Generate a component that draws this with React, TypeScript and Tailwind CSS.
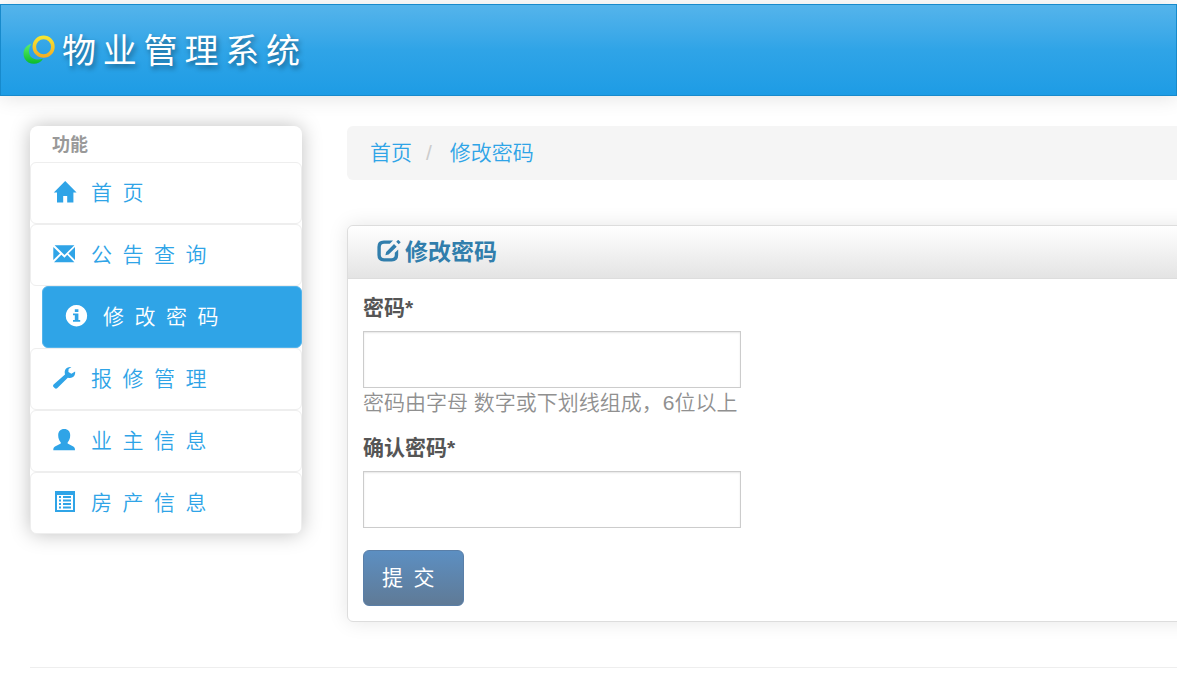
import type { ReactNode } from "react";

function Glyph({ children, className = "size-6" }: { children: ReactNode; className?: string }) {
  return (
    <svg viewBox="0 0 24 24" fill="currentColor" aria-hidden="true" className={`shrink-0 ${className}`}>
      {children}
    </svg>
  );
}

const HomeIcon = () => (
  <Glyph>
    <path d="M12.2 0 L23.6 11.6 H20.4 V21.5 H14.2 V15 H10.2 V21.5 H4 V11.6 H0.8 Z" />
  </Glyph>
);

const MailIcon = () => (
  <Glyph>
    <path d="M1.6 2.2 H21.4 L11.5 12 Z M0.3 4 L7 10.4 L0.3 17 Z M22 4 V17 L15.4 10.4 Z M8.3 11.7 L11.5 14.8 L14.2 11.7 L21.4 19.3 H1 Z" />
  </Glyph>
);

const InfoIcon = () => (
  <Glyph>
    <path
      fillRule="evenodd"
      d="M11.5 0 A10.7 10.7 0 1 1 11.4 0 Z M9.8 4.2 V7 H13.4 V4.2 Z M8 8.4 V10.2 H9.8 V15 H8 V16.8 H15.2 V15 H13.4 V8.4 Z"
    />
  </Glyph>
);

const WrenchIcon = () => (
  <Glyph>
    <path d="M18.4 0.1 C14.2 -0.6 11.2 2.4 11.8 6.2 L12 7.6 L0.6 17.4 C-0.2 18.3 -0.1 19.3 0.6 20 L1.9 21.3 C2.6 21.9 3.6 21.8 4.4 21 L14.8 10.7 L16.4 11 C20 11.3 22.6 8.7 22.1 4.6 L18.4 6.7 L15.4 4.9 L15.6 2 Z" />
  </Glyph>
);

const UserIcon = () => (
  <Glyph>
    <path d="M11.2 0 C15 0 17.2 2.4 17.2 6.2 C17.2 9.2 16.2 11.8 14.6 13.4 V14.6 L20.3 17.6 C21.7 18.4 22 19.4 22 21.2 H0.3 C0.3 19.4 0.6 18.4 2 17.6 L7.8 14.6 V13.4 C6.2 11.8 5.2 9.2 5.2 6.2 C5.2 2.4 7.4 0 11.2 0 Z" />
  </Glyph>
);

const ListIcon = () => (
  <Glyph>
    <path
      fillRule="evenodd"
      d="M2 0 H22 V21 H2 Z M4 4 V19 H20 V4 Z M6 5 H8 V7 H6 Z M10 5 H18 V7 H10 Z M6 8.5 H8 V10.5 H6 Z M10 8.5 H18 V10.5 H10 Z M6 12 H8 V14 H6 Z M10 12 H18 V14 H10 Z M6 15.5 H8 V17.5 H6 Z M10 15.5 H18 V17.5 H10 Z"
    />
  </Glyph>
);

const EditIcon = () => (
  <Glyph>
    <path d="M16 0.6 L12.8 3.8 H7.2 Q3.8 3.8 3.8 7.2 V14.8 Q3.8 18.2 7.2 18.2 H14.4 Q17.8 18.2 17.8 14.8 V12.8 L21.2 9.4 V15 Q21.2 21.4 14.8 21.4 H6.8 Q0.4 21.4 0.4 15 V7 Q0.4 0.6 6.8 0.6 Z" />
    <path d="M17 4 L19.7 6.7 L11.6 14.6 L8.4 15.2 L9.2 12 Z M19.2 1.7 L21.2 -0.2 L23.7 2.3 L21.7 4.2 Z" />
  </Glyph>
);

const menu = [
  { label: "首页", icon: <HomeIcon /> },
  { label: "公告查询", icon: <MailIcon /> },
  { label: "修改密码", icon: <InfoIcon />, active: true },
  { label: "报修管理", icon: <WrenchIcon /> },
  { label: "业主信息", icon: <UserIcon /> },
  { label: "房产信息", icon: <ListIcon /> },
];

function Logo() {
  return (
    <svg viewBox="0 0 32 32" fill="none" aria-hidden="true" className="size-8 shrink-0">
      <defs>
        <linearGradient id="ring" x1="0" y1="0" x2="0" y2="1">
          <stop offset="0" stopColor="#f5e532" />
          <stop offset="1" stopColor="#f3af25" />
        </linearGradient>
        <linearGradient id="arc" x1="0" y1="0" x2="0" y2="1">
          <stop offset="0" stopColor="#5cf06c" />
          <stop offset="1" stopColor="#0bbb2b" />
        </linearGradient>
      </defs>
      <path d="M8.5 9.8 C1.5 11.5 -1.2 18.5 1.6 24.5 C5 31.5 16.5 31.5 20 24.8 C14 26.5 8 25 6.6 20.5 C5.2 17 6.3 13 8.5 9.8 Z" fill="url(#arc)" />
      <circle cx="20.6" cy="12.7" r="9.3" stroke="url(#ring)" strokeWidth="3.6" />
    </svg>
  );
}

function Field({ id, label, hint }: { id: string; label: string; hint?: string }) {
  return (
    <div>
      <label htmlFor={id} className="mb-2 block leading-[30px] font-bold text-[#555]">
        {label}
      </label>
      <input
        id={id}
        type="password"
        className="block h-[57px] w-[378px] max-w-full border border-[#ccc] bg-white px-4 shadow-[inset_0_1px_2px_rgba(0,0,0,0.1)] outline-none"
      />
      {hint && <p className="leading-[30px] font-[350] whitespace-nowrap text-[#909090]">{hint}</p>}
    </div>
  );
}

export default function App() {
  return (
    <div className="min-h-screen overflow-x-hidden bg-white pt-1 font-['Open_Sans','Noto_Sans_CJK_SC',sans-serif] text-[21px]">
      <header className="flex h-[92px] items-center border border-[#178acc] bg-linear-to-b from-[#54b4eb] via-[#2fa4e7] to-[#1d9ce5] px-[22px] shadow-[0_1px_20px_rgba(0,0,0,0.12)]">
        <a href="#" className="flex items-center gap-[7px]">
          <Logo />
          <span className="text-[34px] leading-none font-normal tracking-[0.2em] text-white [text-shadow:2px_3px_5px_rgba(0,0,0,0.4)]">
            物业管理系统
          </span>
        </a>
      </header>

      <div className="flex items-start pt-[30px] pl-[30px]">
        <nav className="w-[272px] shrink-0 rounded-lg bg-white shadow-[0_0_20px_rgba(0,0,0,0.25)]">
          <h2 className="px-[22px] text-lg leading-9 font-bold text-[#999]">功能</h2>
          <ul>
            {menu.map((item) => (
              <li key={item.label} className={item.active ? "pl-3" : ""}>
                <a
                  href="#"
                  className={`flex h-[62px] items-center gap-[14px] rounded-md border px-[22px] font-[350] tracking-[0.5em] ${
                    item.active ? "border-[#54b4eb] bg-[#2fa4e7] text-white" : "border-[#eee] text-[#2fa4e7]"
                  }`}
                >
                  {item.icon}
                  <span>{item.label}</span>
                </a>
              </li>
            ))}
          </ul>
        </nav>

        <main className="-mr-8 ml-[45px] min-w-0 flex-1 font-['Liberation_Sans','Noto_Sans_CJK_SC',sans-serif]">
          <nav className="flex h-[54px] items-center rounded-md bg-[#f5f5f5] px-[23px] font-[350]">
            <a href="#" className="text-[#2fa4e7]">首页</a>
            <span className="pr-[18px] pl-[14px] text-[#ccc]">/</span>
            <a href="#" className="text-[#2fa4e7]">修改密码</a>
          </nav>

          <section className="mt-[45px] rounded-md border border-[#ddd] bg-white shadow-[0_0_20px_rgba(0,0,0,0.1)]">
            <h1 className="flex h-[53px] items-center gap-1 rounded-t-md border-b border-[#ddd] bg-linear-to-b from-white to-[#e4e4e4] px-[29px] text-[23px] font-bold text-[#317eac]">
              <EditIcon />
              修改密码
            </h1>
            <form className="px-[15px] pt-[14px] pb-[15px]" onSubmit={(e) => e.preventDefault()}>
              <div className="flex flex-col gap-[15px]">
                <Field id="password" label="密码*" hint="密码由字母 数字或下划线组成，6位以上" />
                <Field id="confirm" label="确认密码*" />
              </div>
              <button
                type="submit"
                className="mt-[22px] flex h-14 items-center rounded-md border border-[#5a7fa8] bg-linear-to-b from-[#5c8fc2] to-[#5f7a96] px-[18px] font-normal tracking-[0.5em] text-white"
              >
                提交
              </button>
            </form>
          </section>
        </main>
      </div>

      <hr className="mt-[45px] ml-[30px] border-[#eee]" />
    </div>
  );
}
